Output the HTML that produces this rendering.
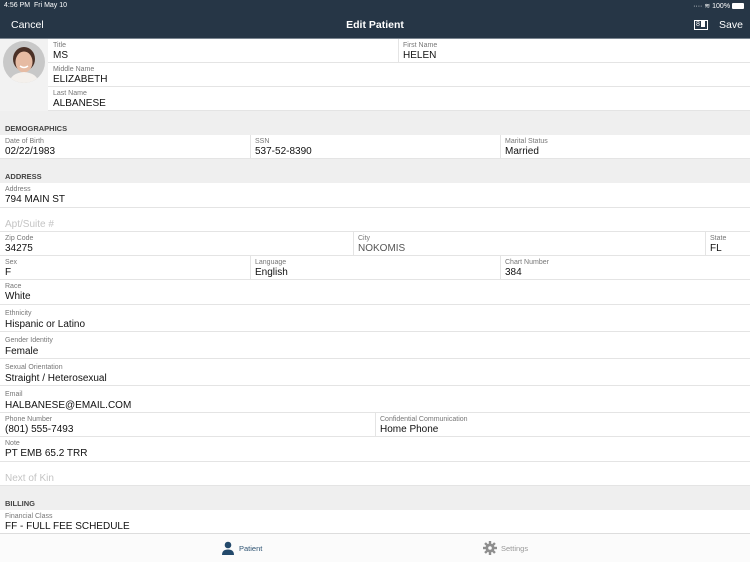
<!DOCTYPE html>
<html><head><meta charset="utf-8"><style>
*{margin:0;padding:0;box-sizing:border-box}
body{width:750px;height:562px;overflow:hidden;background:#fff;font-family:"Liberation Sans",sans-serif;position:relative;color:#111}
.a{position:absolute}
.nav{left:0;top:0;width:750px;height:38px;background:#263646;color:#fff}
.row{position:absolute;background:#fff;border-bottom:1px solid #e4e4e4}
.lb{position:absolute;font-size:7px;color:#777;left:5px;margin-top:1px}
.v{position:absolute;font-size:10px;color:#111;left:5px;margin-top:0px}
.ph{position:absolute;font-size:10px;color:#c4c4c4;left:5px}
.hd{position:absolute;left:0;width:750px;background:#efefef;font-size:7.5px;font-weight:bold;color:#444}
.hd span{position:absolute;left:5px;bottom:2px}
.vl{position:absolute;top:0;bottom:0;width:1px;background:#e4e4e4}
</style></head><body>
<div class="a nav">
 <div class="a" style="left:4px;top:2px;font-size:7px">4:56 PM&nbsp;&nbsp;Fri May 10</div>
 <div class="a" style="right:6px;top:2px;font-size:7px">···· ≋ 100% <span style="display:inline-block;width:12px;height:6px;background:#fff;vertical-align:middle;border-radius:1px"></span></div>
 <div class="a" style="left:11px;top:19px;font-size:10.5px">Cancel</div>
 <div class="a" style="left:0;width:750px;text-align:center;top:19px;font-size:10.5px;font-weight:bold">Edit Patient</div>
 <div class="a" style="left:694px;top:20px;width:14px;height:10px;border:1px solid #fff;font-size:7px;line-height:8px;padding-left:1px">8<span style="display:inline-block;width:4px;height:6px;background:#fff;margin-left:1px;vertical-align:-1px"></span></div>
 <div class="a" style="left:719px;top:19px;font-size:10.5px">Save</div>
</div>
<div class="a" style="left:0;top:38px;width:750px;height:1px;background:#7a8590"></div>
<div class="a" style="left:0;top:39px;width:48px;height:72px;background:#f2f2f2"></div>
<svg class="a" style="left:3px;top:41px" width="42" height="42" viewBox="0 0 42 42"><defs><clipPath id="c"><circle cx="21" cy="21" r="21"/></clipPath></defs><g clip-path="url(#c)"><rect width="42" height="42" fill="#c8c8c8"/><ellipse cx="21" cy="18" rx="11" ry="12" fill="#4a3026"/><ellipse cx="21" cy="21" rx="8.5" ry="10.5" fill="#e6bba3"/><path d="M6 42 Q8 32 21 31 Q34 32 36 42Z" fill="#f4f0ec"/><path d="M17 25 Q21 28 25 25" stroke="#fff" stroke-width="1.5" fill="none"/></g></svg>

<div class="row" style="left:48px;top:39px;width:702px;height:24px"><div class="lb" style="top:2px">Title</div><div class="v" style="top:11px">MS</div>
 <div class="vl" style="left:350px"></div><div class="lb" style="left:355px;top:2px">First Name</div><div class="v" style="left:355px;top:11px">HELEN</div></div>
<div class="row" style="left:48px;top:63px;width:702px;height:24px"><div class="lb" style="top:2px">Middle Name</div><div class="v" style="top:11px">ELIZABETH</div></div>
<div class="row" style="left:48px;top:87px;width:702px;height:24px"><div class="lb" style="top:2px">Last Name</div><div class="v" style="top:11px">ALBANESE</div></div>

<div class="hd" style="top:111px;height:24px"><span>DEMOGRAPHICS</span></div>
<div class="row" style="left:0;top:135px;width:750px;height:24px"><div class="lb" style="top:2px">Date of Birth</div><div class="v" style="top:11px">02/22/1983</div>
 <div class="vl" style="left:250px"></div><div class="lb" style="left:255px;top:2px">SSN</div><div class="v" style="left:255px;top:11px">537-52-8390</div>
 <div class="vl" style="left:500px"></div><div class="lb" style="left:505px;top:2px">Marital Status</div><div class="v" style="left:505px;top:11px">Married</div></div>
<div class="hd" style="top:159px;height:24px"><span>ADDRESS</span></div>
<div class="row" style="left:0;top:183px;width:750px;height:25px"><div class="lb" style="top:2px">Address</div><div class="v" style="top:11px">794 MAIN ST</div></div>
<div class="row" style="left:0;top:208px;width:750px;height:24px"><div class="ph" style="top:11px">Apt/Suite #</div></div>
<div class="row" style="left:0;top:232px;width:750px;height:24px"><div class="lb" style="top:2px">Zip Code</div><div class="v" style="top:11px">34275</div>
 <div class="vl" style="left:353px"></div><div class="lb" style="left:358px;top:2px">City</div><div class="v" style="left:358px;top:11px;color:#555">NOKOMIS</div>
 <div class="vl" style="left:705px"></div><div class="lb" style="left:710px;top:2px">State</div><div class="v" style="left:710px;top:11px">FL</div></div>
<div class="row" style="left:0;top:256px;width:750px;height:24px"><div class="lb" style="top:2px">Sex</div><div class="v" style="top:11px">F</div>
 <div class="vl" style="left:250px"></div><div class="lb" style="left:255px;top:2px">Language</div><div class="v" style="left:255px;top:11px">English</div>
 <div class="vl" style="left:500px"></div><div class="lb" style="left:505px;top:2px">Chart Number</div><div class="v" style="left:505px;top:11px">384</div></div>
<div class="row" style="left:0;top:280px;width:750px;height:25px"><div class="lb" style="top:2px">Race</div><div class="v" style="top:11px">White</div></div>
<div class="row" style="left:0;top:305px;width:750px;height:27px"><div class="lb" style="top:4px">Ethnicity</div><div class="v" style="top:14px">Hispanic or Latino</div></div>
<div class="row" style="left:0;top:332px;width:750px;height:27px"><div class="lb" style="top:4px">Gender Identity</div><div class="v" style="top:14px">Female</div></div>
<div class="row" style="left:0;top:359px;width:750px;height:27px"><div class="lb" style="top:4px">Sexual Orientation</div><div class="v" style="top:14px">Straight / Heterosexual</div></div>
<div class="row" style="left:0;top:386px;width:750px;height:27px"><div class="lb" style="top:4px">Email</div><div class="v" style="top:14px">HALBANESE@EMAIL.COM</div></div>
<div class="row" style="left:0;top:413px;width:750px;height:24px"><div class="lb" style="top:2px">Phone Number</div><div class="v" style="top:11px">(801) 555-7493</div>
 <div class="vl" style="left:375px"></div><div class="lb" style="left:380px;top:2px">Confidential Communication</div><div class="v" style="left:380px;top:11px">Home Phone</div></div>
<div class="row" style="left:0;top:437px;width:750px;height:25px"><div class="lb" style="top:2px">Note</div><div class="v" style="top:11px">PT EMB 65.2 TRR</div></div>
<div class="row" style="left:0;top:462px;width:750px;height:24px"><div class="ph" style="top:11px">Next of Kin</div></div>
<div class="hd" style="top:486px;height:24px"><span>BILLING</span></div>
<div class="row" style="left:0;top:510px;width:750px;height:24px;border-bottom:none"><div class="lb" style="top:2px">Financial Class</div><div class="v" style="top:11px">FF - FULL FEE SCHEDULE</div></div>

<div class="a" style="left:0;top:533px;width:750px;height:29px;background:#fbfbfb;border-top:1px solid #ddd">
 <svg class="a" style="left:221px;top:7px" width="14" height="14" viewBox="0 0 14 14"><circle cx="7" cy="4" r="3.3" fill="#23496b"/><path d="M1 14 Q1 8.5 7 8.5 Q13 8.5 13 14Z" fill="#23496b"/></svg>
 <div class="a" style="left:239px;top:10px;font-size:7.5px;color:#2f5473">Patient</div>
 <svg class="a" style="left:483px;top:7px" width="14" height="14" viewBox="0 0 14 14"><g fill="#8e8e8e"><circle cx="7" cy="7" r="4.5"/><rect x="5.8" y="0" width="2.4" height="14"/><rect x="0" y="5.8" width="14" height="2.4"/><rect x="5.8" y="0" width="2.4" height="14" transform="rotate(45 7 7)"/><rect x="5.8" y="0" width="2.4" height="14" transform="rotate(-45 7 7)"/></g><circle cx="7" cy="7" r="1.8" fill="#fbfbfb"/></svg>
 <div class="a" style="left:501px;top:10px;font-size:7.5px;color:#999">Settings</div>
</div>
</body></html>
